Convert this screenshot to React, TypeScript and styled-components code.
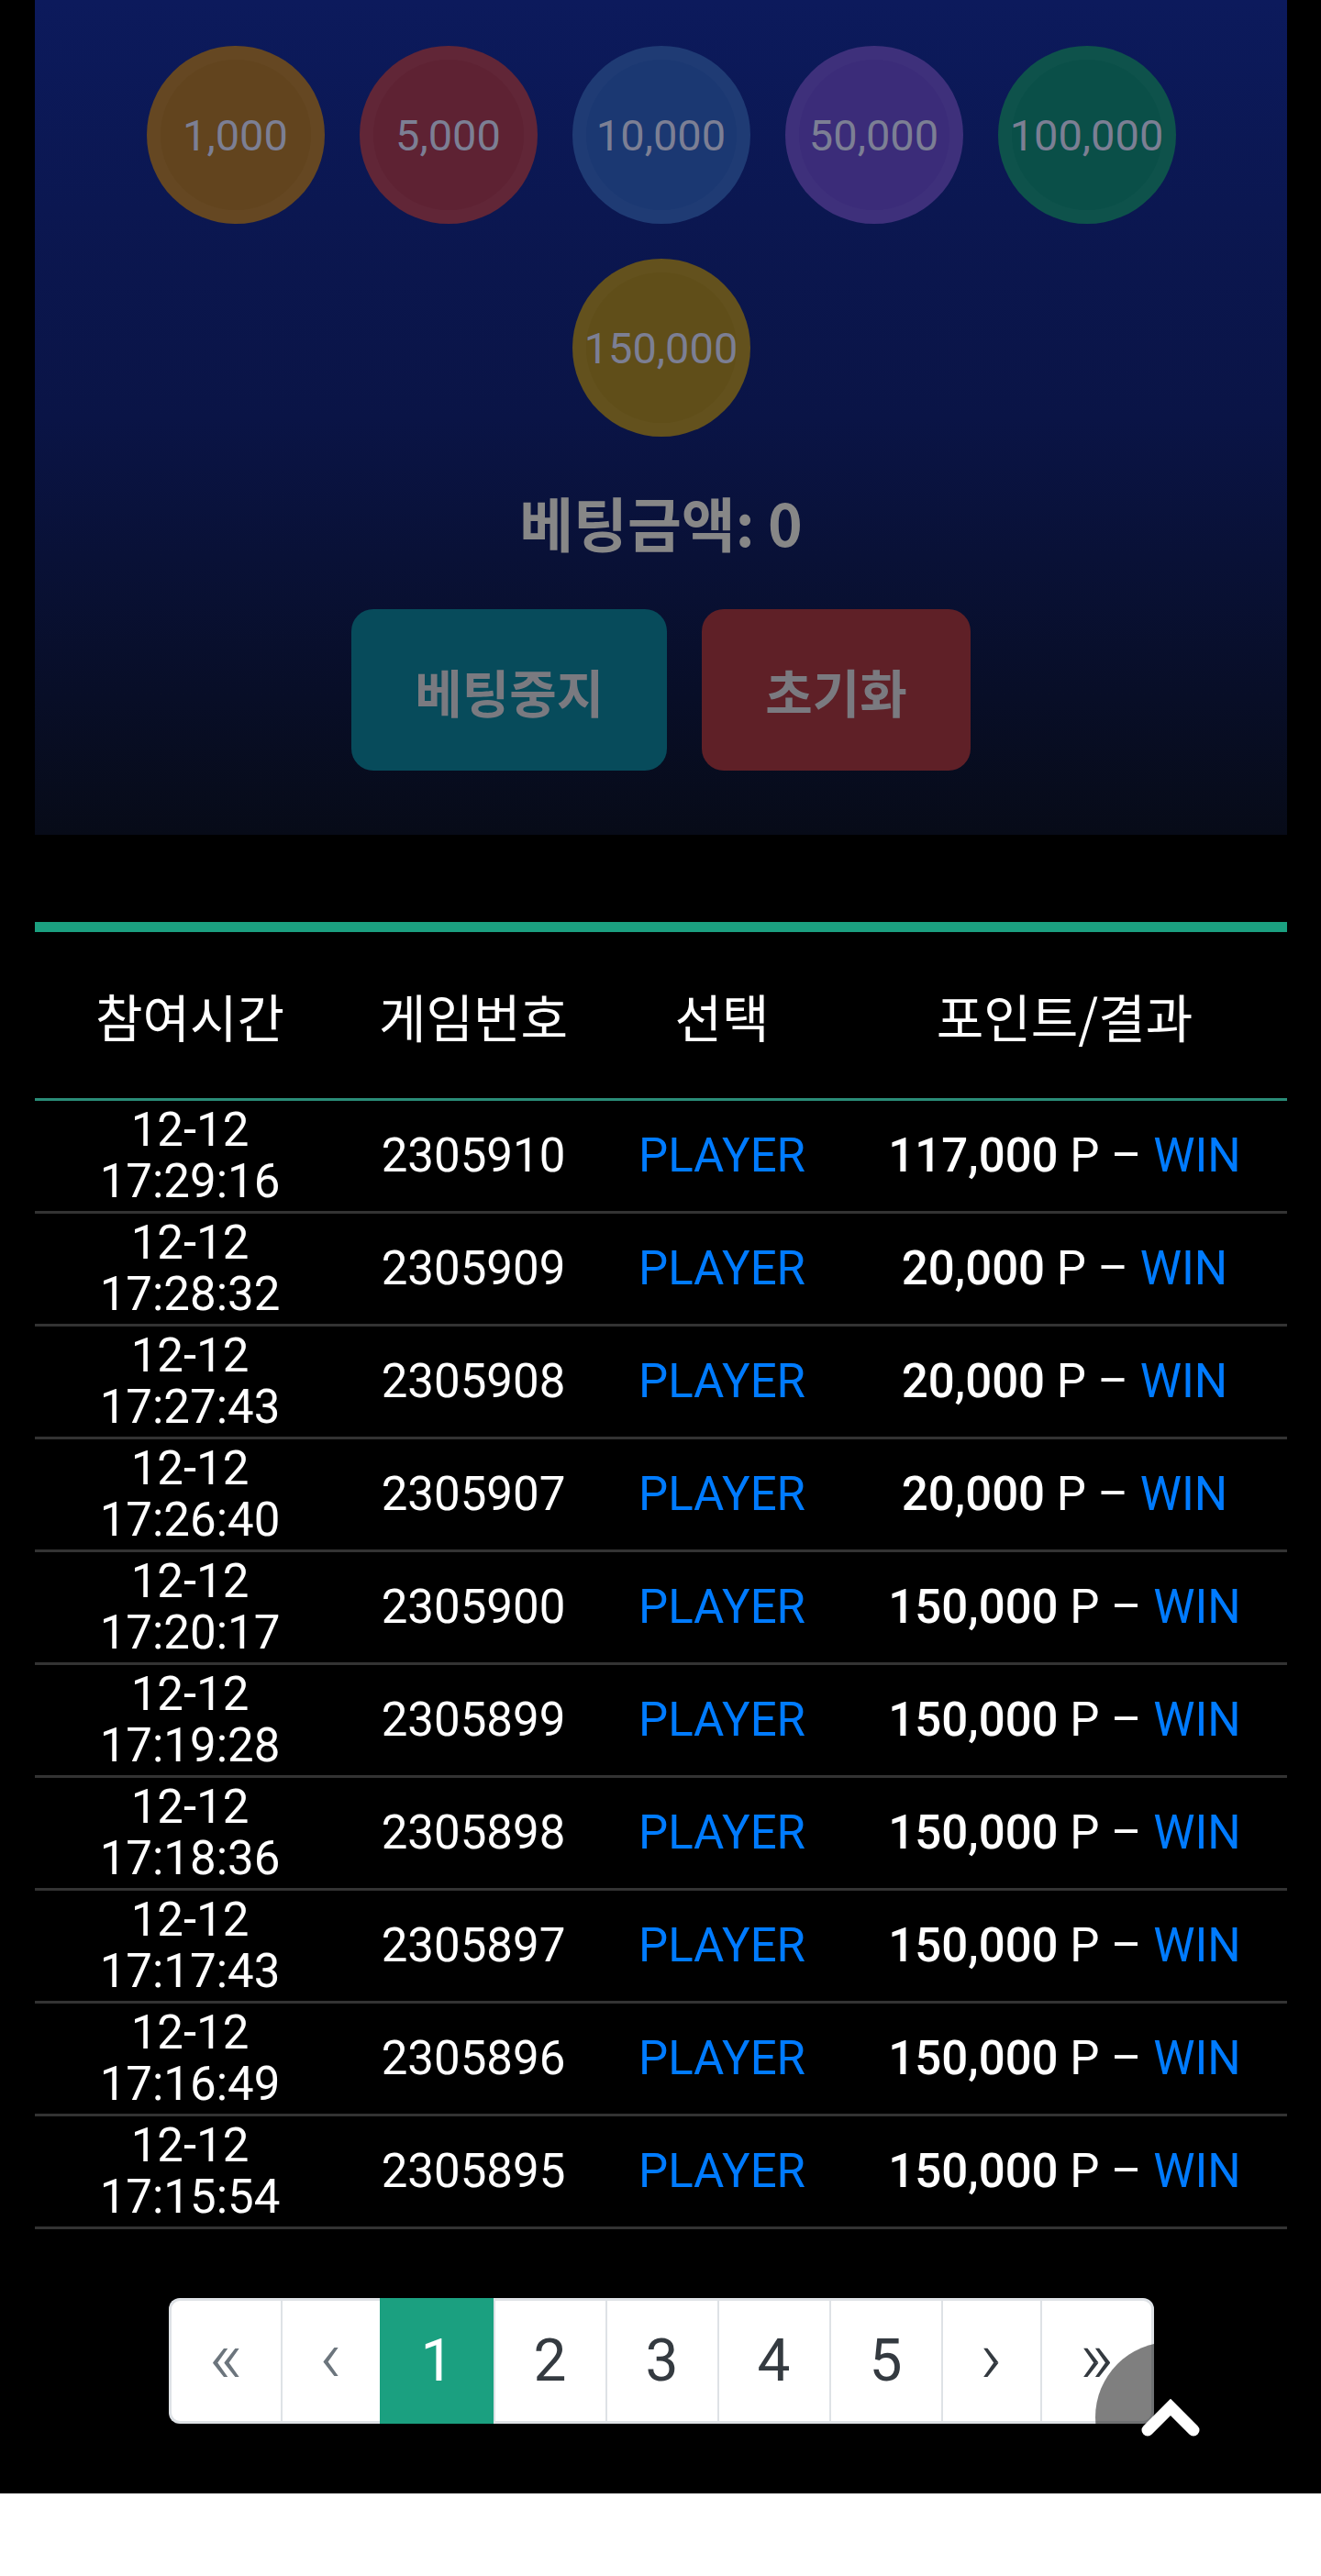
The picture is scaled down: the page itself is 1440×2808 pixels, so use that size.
import React from "react";
import styled, { createGlobalStyle } from "styled-components";

const GlobalStyle = createGlobalStyle`
  html, body {
    margin: 0;
    padding: 0;
    background: #fff;
  }
  body {
    font-family: Roboto, "Noto Sans CJK KR", sans-serif;
  }
`;

const Page = styled.div`
  background: #000;
  padding: 0 37px 76px 38px;
`;

const BetPanel = styled.section`
  background: linear-gradient(180deg, #0c1a5c 0%, #0a1446 50%, #070b18 100%);
  padding: 50px 0 70px;
  display: flex;
  flex-direction: column;
  align-items: center;
`;

const ChipGrid = styled.div`
  display: flex;
  flex-wrap: wrap;
  justify-content: center;
  gap: 38px;
  width: 1130px;
`;

const Chip = styled.button<{ $color: string }>`
  width: 194px;
  height: 194px;
  box-sizing: border-box;
  border-radius: 50%;
  border: 15px solid rgba(255, 255, 255, 0.018);
  background: ${p => p.$color};
  color: #7c7f94;
  font: 400 47px Roboto, sans-serif;
  padding: 0;
  display: flex;
  align-items: center;
  justify-content: center;
`;

const BetAmount = styled.div`
  margin-top: 55px;
  font: 700 64px/74px "Noto Sans CJK KR", sans-serif;
  color: #878787;
`;

const ButtonRow = styled.div`
  display: flex;
  gap: 38px;
  margin-top: 59px;
`;

const ActionButton = styled.button<{ $bg: string }>`
  height: 176px;
  padding: 0 69px;
  border: none;
  border-radius: 24px;
  background: ${p => p.$bg};
  color: #7a7a80;
  font: 700 56px "Noto Sans CJK KR", sans-serif;
`;

const HistoryTable = styled.div`
  margin-top: 95px;
  border-top: 11px solid #1ba080;
`;

const Row = styled.div`
  display: grid;
  grid-template-columns: 338px 280px 262px 1fr;
  box-sizing: border-box;
  color: #fff;
`;

const HeadRow = styled(Row)`
  height: 184px;
  border-bottom: 3px solid #2a8c78;
  font: 400 56px "Noto Sans CJK KR", sans-serif;
`;

const BodyRow = styled(Row)`
  height: 123px;
  border-bottom: 3px solid #333;
  font: 400 51px/56px Roboto, "Noto Sans CJK KR", sans-serif;
`;

const Cell = styled.div`
  display: flex;
  flex-direction: column;
  align-items: center;
  justify-content: center;
  text-align: center;
  white-space: nowrap;
`;

const Blue = styled.span`
  color: #007bff;
`;

const Amount = styled.span`
  font-weight: 500;
`;

const Pager = styled.ul`
  list-style: none;
  margin: 75px 0 0;
  padding: 0;
  display: flex;
  justify-content: center;
`;

const PageItem = styled.li<{ $w: number; $active?: boolean; $muted?: boolean; $arrow?: boolean }>`
  width: ${p => p.$w}px;
  height: 137px;
  box-sizing: border-box;
  display: flex;
  align-items: center;
  justify-content: center;
  background: ${p => (p.$active ? "#1ba080" : "#fff")};
  border-top: 3px solid ${p => (p.$active ? "#1ba080" : "#dee2e6")};
  border-bottom: 3px solid ${p => (p.$active ? "#1ba080" : "#dee2e6")};
  border-left: 2px solid ${p => (p.$active ? "#1ba080" : "#dee2e6")};
  color: ${p => (p.$active ? "#fff" : p.$muted ? "#6c757d" : "#343a40")};
  font: ${p => (p.$arrow ? "300 82px" : "400 64px")} Roboto, sans-serif;
  padding-bottom: ${p => (p.$arrow ? "10px" : "0")};

  &:first-child {
    border-left-width: 3px;
    border-radius: 12px 0 0 12px;
  }
  &:last-child {
    border-right: 3px solid #dee2e6;
    border-radius: 0 12px 12px 0;
  }
`;

const ScrollTop = styled.button`
  position: fixed;
  right: 82px;
  bottom: 91px;
  width: 164px;
  height: 164px;
  border-radius: 50%;
  border: none;
  padding: 0;
  background: rgba(0, 0, 0, 0.5);
  display: flex;
  align-items: center;
  justify-content: center;
`;

const chips = [
  { label: "1,000", color: "#62441e" },
  { label: "5,000", color: "#5e2233" },
  { label: "10,000", color: "#1b3872" },
  { label: "50,000", color: "#3b2c79" },
  { label: "100,000", color: "#0a4f48" },
  { label: "150,000", color: "#604e19" },
];

const history = [
  ["17:29:16", "2305910", "117,000"],
  ["17:28:32", "2305909", "20,000"],
  ["17:27:43", "2305908", "20,000"],
  ["17:26:40", "2305907", "20,000"],
  ["17:20:17", "2305900", "150,000"],
  ["17:19:28", "2305899", "150,000"],
  ["17:18:36", "2305898", "150,000"],
  ["17:17:43", "2305897", "150,000"],
  ["17:16:49", "2305896", "150,000"],
  ["17:15:54", "2305895", "150,000"],
];

const pages = [
  { label: "«", w: 122, muted: true, arrow: true },
  { label: "‹", w: 108, muted: true, arrow: true },
  { label: "1", w: 124, active: true },
  { label: "2", w: 122 },
  { label: "3", w: 122 },
  { label: "4", w: 122 },
  { label: "5", w: 122 },
  { label: "›", w: 108, arrow: true },
  { label: "»", w: 124, arrow: true },
];

export default function App() {
  return (
    <>
      <GlobalStyle />
      <Page>
        <BetPanel>
          <ChipGrid>
            {chips.map(c => (
              <Chip key={c.label} $color={c.color}>{c.label}</Chip>
            ))}
          </ChipGrid>
          <BetAmount>베팅금액: 0</BetAmount>
          <ButtonRow>
            <ActionButton $bg="#074b5b">베팅중지</ActionButton>
            <ActionButton $bg="#5f2027">초기화</ActionButton>
          </ButtonRow>
        </BetPanel>

        <HistoryTable>
          <HeadRow>
            <Cell>참여시간</Cell>
            <Cell>게임번호</Cell>
            <Cell>선택</Cell>
            <Cell>포인트/결과</Cell>
          </HeadRow>
          {history.map(([time, game, amount]) => (
            <BodyRow key={game}>
              <Cell>
                <span>12-12</span>
                <span>{time}</span>
              </Cell>
              <Cell>{game}</Cell>
              <Cell><Blue>PLAYER</Blue></Cell>
              <Cell>
                <span>
                  <Amount>{amount}</Amount> P – <Blue>WIN</Blue>
                </span>
              </Cell>
            </BodyRow>
          ))}
        </HistoryTable>

        <Pager>
          {pages.map(p => (
            <PageItem key={p.label} $w={p.w} $active={p.active} $muted={p.muted} $arrow={p.arrow}>
              {p.label}
            </PageItem>
          ))}
        </Pager>
      </Page>

      <ScrollTop aria-label="맨 위로">
        <svg width="64" height="42" viewBox="0 0 64 42">
          <polyline
            points="7,35 32,10 57,35"
            fill="none"
            stroke="#fff"
            strokeWidth="13"
            strokeLinecap="round"
            strokeLinejoin="miter"
          />
        </svg>
      </ScrollTop>
    </>
  );
}
